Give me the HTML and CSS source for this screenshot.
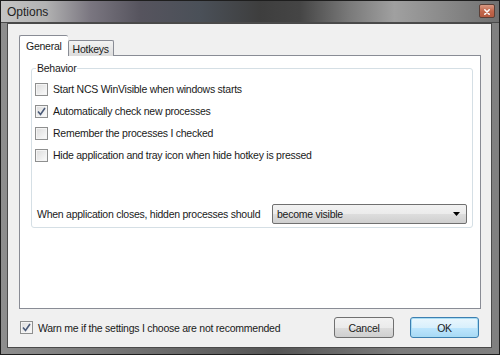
FILE: index.html
```html
<!DOCTYPE html>
<html>
<head>
<meta charset="utf-8">
<link rel="stylesheet" href="styles.css">
</head>
<body>
<div class="window">
  <div class="titlebar">
    <span class="title">Options</span>
    <div class="close">
      <svg width="16" height="14" viewBox="0 0 16 14"><path d="M5.5 4.5 L10.5 9.5 M10.5 4.5 L5.5 9.5" stroke="#fff" stroke-width="1.8" stroke-linecap="round"/></svg>
    </div>
  </div>
  <div class="frame">
    <div class="client">
      <div class="tabs">
        <div class="tab active">General</div>
        <div class="tab">Hotkeys</div>
      </div>
      <div class="panel">
        <fieldset class="group">
          <legend>Behavior</legend>
          <div class="row"><span class="cb"></span><span>Start NCS WinVisible when windows starts</span></div>
          <div class="row"><span class="cb checked"><svg width="11" height="11" viewBox="0 0 11 11"><path d="M2 5.5 L4.5 8.5 L9 2" fill="none" stroke="#4a5a78" stroke-width="1.6"/></svg></span><span>Automatically check new processes</span></div>
          <div class="row"><span class="cb"></span><span>Remember the processes I checked</span></div>
          <div class="row"><span class="cb"></span><span>Hide application and tray icon when hide hotkey is pressed</span></div>
          <div class="combo-row">
            <span class="label">When application closes, hidden processes should</span>
            <div class="combo">
              <span>become visible</span>
              <svg width="7" height="4" viewBox="0 0 7 4"><path d="M0 0 H7 L3.5 4 Z" fill="#000"/></svg>
            </div>
          </div>
        </fieldset>
      </div>
      <div class="footer">
        <div class="row warn"><span class="cb checked"><svg width="11" height="11" viewBox="0 0 11 11"><path d="M2 5.5 L4.5 8.5 L9 2" fill="none" stroke="#4a5a78" stroke-width="1.6"/></svg></span><span>Warn me if the settings I choose are not recommended</span></div>
        <div class="buttons">
          <div class="btn cancel">Cancel</div>
          <div class="btn default">OK</div>
        </div>
      </div>
    </div>
  </div>
</div>
</body>
</html>
```

FILE: styles.css
```css
* { box-sizing: border-box; }
html, body { margin: 0; padding: 0; }
body {
  width: 500px;
  height: 355px;
  overflow: hidden;
  background: #2a2a2a;
  font-family: "Liberation Sans", Arial, sans-serif;
  font-size: 10.5px;
  letter-spacing: -0.25px;
  color: #1a1a1a;
}
.window {
  width: 500px;
  height: 355px;
  display: flex;
  flex-direction: column;
  border: 1px solid #1e1e1e;
  background: linear-gradient(90deg, #8e8e8e 0%, #6e6e6e 30%, #555 55%, #7c7c7c 80%, #808080 100%);
}
.titlebar {
  height: 22px;
  display: flex;
  align-items: center;
  justify-content: space-between;
  padding: 0 4px 0 6px;
  background: linear-gradient(90deg, #c4c4c4 0%, #b2b2b2 9%, #7a7680 18%, #56545e 28%, #4a5058 40%, #3e3e3e 52%, #454545 60%, #7a7a7a 70%, #a0a0a0 79%, #8c8c8c 88%, #707070 100%);
  border-bottom: 1px solid #4a4a4a;
}
.title {
  font-size: 12px;
  letter-spacing: 0;
  color: #222;
  margin-top: 1px;
}
.close {
  width: 16px;
  height: 14px;
  margin-top: -2px;
  border: 1px solid #5a4038;
  border-radius: 2px;
  background: linear-gradient(#d99a84, #c2674c 50%, #b45a40);
  display: flex;
}
.frame {
  flex: 1;
  display: flex;
  padding: 0 9px 6px 6px;
}
.client {
  flex: 1;
  background: #f0f0f0;
  border: 1px solid #4a4a4a;
  display: flex;
  flex-direction: column;
  padding: 11px 10px 0 11px;
}
.tabs {
  display: flex;
  align-items: flex-end;
  height: 21px;
  margin-bottom: -1px;
  position: relative;
  z-index: 1;
}
.tab {
  height: 16px;
  padding: 0 4px;
  border: 1px solid #898c95;
  border-bottom: none;
  background: linear-gradient(#f3f3f3, #dcdcdc);
  display: flex;
  align-items: center;
  border-radius: 2px 2px 0 0;
}
.tab.active {
  height: 21px;
  padding: 0 6px;
  background: #fff;
  border-right: none;
}
.panel {
  width: 462px;
  height: 254px;
  background: #fff;
  border: 1px solid #898c95;
  padding: 6px 7px 0 11px;
}
.group {
  margin: 0;
  border: 1px solid #d5dfe5;
  border-radius: 3px;
  padding: 3px 0 3px 3px;
  min-width: 0;
}
.group legend {
  padding: 0 1px;
  margin-left: 1px;
  line-height: 13px;
}
.row {
  display: flex;
  align-items: center;
  height: 22px;
  gap: 5px;
  white-space: nowrap;
}
.cb {
  width: 13px;
  height: 13px;
  border: 1px solid #8e8f8f;
  background: linear-gradient(135deg, #dcdcdc, #fbfbfb);
  box-shadow: inset 0 0 0 1px #f4f4f4;
  display: flex;
  align-items: center;
  justify-content: center;
  flex: none;
}
.combo-row {
  display: flex;
  align-items: center;
  margin-top: 38px;
  height: 20px;
  white-space: nowrap;
}
.label { padding-left: 2px; }
.combo {
  margin-left: auto;
  margin-right: 5px;
  width: 195px;
  height: 20px;
  border: 1px solid #707070;
  border-radius: 2px;
  background: linear-gradient(#f2f2f2, #ebebeb 50%, #dddddd 51%, #cfcfcf);
  display: flex;
  align-items: center;
  justify-content: space-between;
  padding: 0 6px 0 4px;
}
.footer {
  display: flex;
  align-items: center;
  justify-content: space-between;
  padding: 8px 2px 0 1px;
}
.warn { height: 21px; }
.buttons { display: flex; gap: 16px; }
.btn {
  width: 69px;
  height: 21px;
  border: 1px solid #707070;
  border-radius: 3px;
  background: linear-gradient(#f2f2f2, #ebebeb 50%, #dddddd 51%, #cfcfcf);
  display: flex;
  align-items: center;
  justify-content: center;
}
.btn.cancel { width: 60px; }
.btn.default {
  border-color: #3c7fb1;
  box-shadow: inset 0 0 0 1px #a8dcf3;
  background: linear-gradient(#eaf6fd, #d9f0fc 50%, #bee6fd 51%, #a7d9f5);
}
```
